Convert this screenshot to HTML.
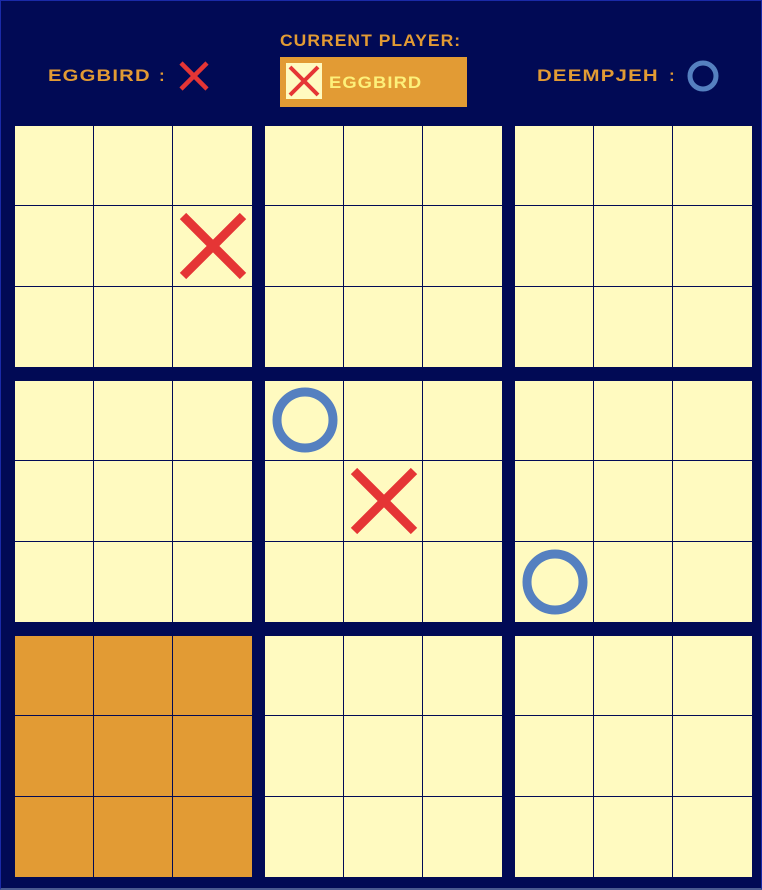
<!DOCTYPE html>
<html><head><style>
*{margin:0;padding:0;box-sizing:border-box}
html,body{width:762px;height:890px;overflow:hidden;background:#010a55}
.frame{position:absolute;left:0;top:0;width:762px;height:890px;border:1px solid #1a2aa8;border-bottom:2px solid #4a5a90;border-right:1px solid #1a2aa8}
.t{position:absolute;font-family:"Liberation Sans",sans-serif;font-weight:bold;color:#e29b34;font-size:17px;line-height:12px;letter-spacing:1px;white-space:nowrap;transform-origin:0 0}
.board{position:absolute;width:237px;height:241px;display:grid;grid-template-columns:78px 78px 79px;grid-template-rows:79px 80px 80px;gap:1px;background:#010a55}
.board div{background:#fffac0;position:relative}
.board.hl div{background:#e29b34}
svg{position:absolute}
</style></head><body>
<div class="frame"></div>
<div class="t" style="left:48px;top:70px;transform:scaleX(1.19)">EGGBIRD</div>
<div class="t" style="left:159px;top:70px">:</div>
<svg style="left:178px;top:60px" width="32" height="32"><path d="M3 3L29 29M29 3L3 29" stroke="#e53535" stroke-width="4.5"/></svg>
<div class="t" style="left:280px;top:35px;transform:scaleX(1.03)">CURRENT PLAYER:</div>
<div style="position:absolute;left:280px;top:57px;width:187px;height:50px;background:#e29b34"></div>
<div style="position:absolute;left:286px;top:63px;width:36px;height:36px;background:#fffac0"></div>
<svg style="left:286px;top:63px" width="36" height="36"><path d="M4 4L32 32M32 4L4 32" stroke="#e53535" stroke-width="4"/></svg>
<div class="t" style="left:329px;top:77px;color:#fdf07a;transform:scaleX(1.08)">EGGBIRD</div>
<div class="t" style="left:537px;top:70px;transform:scaleX(1.2)">DEEMPJEH</div>
<div class="t" style="left:669px;top:70px">:</div>
<svg style="left:686px;top:59px" width="34" height="34"><circle cx="17" cy="17" r="13" fill="none" stroke="#5580c0" stroke-width="5"/></svg>

<div class="board" style="left:15px;top:126px"><div></div><div></div><div></div><div></div><div></div><div></div><div></div><div></div><div></div></div>
<div class="board" style="left:265px;top:126px"><div></div><div></div><div></div><div></div><div></div><div></div><div></div><div></div><div></div></div>
<div class="board" style="left:515px;top:126px"><div></div><div></div><div></div><div></div><div></div><div></div><div></div><div></div><div></div></div>
<div class="board" style="left:15px;top:381px;height:240px"><div></div><div></div><div></div><div></div><div></div><div></div><div></div><div></div><div></div></div>
<div class="board" style="left:265px;top:381px;height:240px"><div></div><div></div><div></div><div></div><div></div><div></div><div></div><div></div><div></div></div>
<div class="board" style="left:515px;top:381px;height:240px"><div></div><div></div><div></div><div></div><div></div><div></div><div></div><div></div><div></div></div>
<div class="board hl" style="left:15px;top:636px;height:240px"><div></div><div></div><div></div><div></div><div></div><div></div><div></div><div></div><div></div></div>
<div class="board" style="left:265px;top:636px;height:240px"><div></div><div></div><div></div><div></div><div></div><div></div><div></div><div></div><div></div></div>
<div class="board" style="left:515px;top:636px;height:240px"><div></div><div></div><div></div><div></div><div></div><div></div><div></div><div></div><div></div></div>

<svg style="left:178px;top:211px" width="70" height="70"><path d="M5 5L65 65M65 5L5 65" stroke="#e53535" stroke-width="9"/></svg>
<svg style="left:349px;top:466px" width="70" height="70"><path d="M5 5L65 65M65 5L5 65" stroke="#e53535" stroke-width="9"/></svg>
<svg style="left:270px;top:385px" width="70" height="70"><circle cx="35" cy="35" r="28" fill="none" stroke="#5580c0" stroke-width="9"/></svg>
<svg style="left:520px;top:547px" width="70" height="70"><circle cx="35" cy="35" r="28" fill="none" stroke="#5580c0" stroke-width="9"/></svg>
</body></html>
